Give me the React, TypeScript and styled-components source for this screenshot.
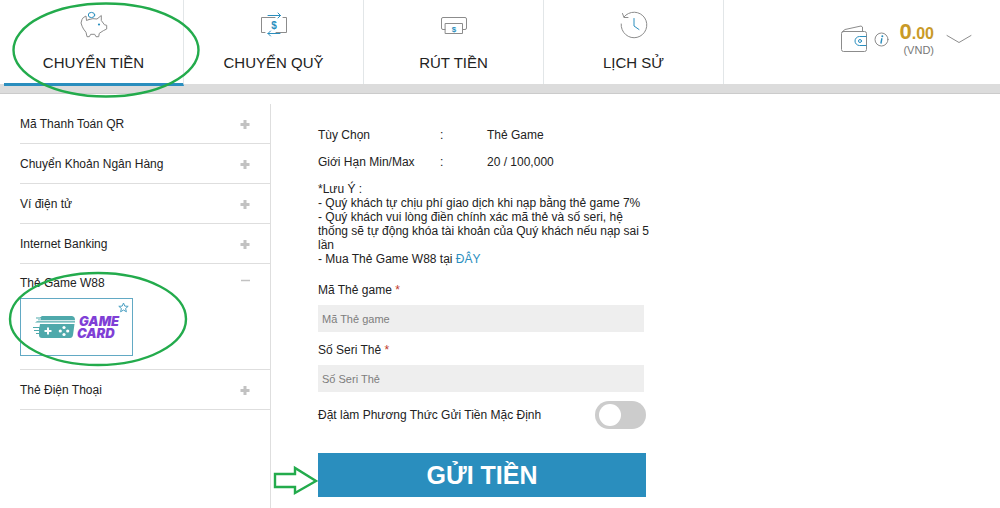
import React from "react";
import styled, { createGlobalStyle } from "styled-components";

const BLUE = "#2a8ebe";
const GREEN = "#23ab4c";
const LINE = "#dedede";

const GlobalStyle = createGlobalStyle`
  *, *::before, *::after { box-sizing: border-box; }
  body {
    margin: 0;
    background: #fff;
    color: #222;
    font-family: "Liberation Sans", Arial, sans-serif;
    font-size: 12px;
  }
  button, input { font-family: inherit; }
`;

const Page = styled.div`
  display: flex;
  flex-direction: column;
  min-height: 100vh;
`;

const Header = styled.header`
  display: flex;
  justify-content: space-between;
  height: 94px;
  padding: 0 28px 0 4px;
  border-bottom: 1px solid #cbcbcb;
  background: linear-gradient(#fff 84px, #dcdcdc 84px);
`;

const Tabs = styled.nav`
  display: flex;
  height: 84px;
`;

const Tab = styled.a<{ $active?: boolean }>`
  position: relative;
  display: flex;
  flex-direction: column;
  align-items: center;
  gap: 12px;
  width: 180px;
  height: ${(p) => (p.$active ? 86 : 84)}px;
  padding-top: 11px;
  border-right: 1px solid #e2e6e8;
  border-bottom: ${(p) => (p.$active ? `3px solid ${BLUE}` : "0")};
  color: #222;
  font-size: 15px;
  line-height: 24px;
  text-decoration: none;
`;

const Icon = styled.svg`
  flex: none;
  fill: none;
  stroke: #8c8c8c;
  stroke-width: 1;
  stroke-linejoin: round;
  stroke-linecap: round;

  .accent { stroke: ${BLUE}; }
  .solid { fill: ${BLUE}; stroke: none; }
  text {
    fill: ${BLUE};
    stroke: none;
    font-weight: bold;
    text-anchor: middle;
  }
`;

const Account = styled.div`
  display: flex;
  align-items: center;
  height: 78px;
`;

const Balance = styled.div`
  display: flex;
  flex-direction: column;
  align-items: flex-end;
  margin: 0 12px 0 11px;
  color: #c99a28;
  font-size: 16px;
  font-weight: bold;
  line-height: 20px;

  big { font-size: 22px; }
  small {
    color: #777;
    font-size: 11px;
    font-weight: normal;
    line-height: 12px;
  }
`;

const PlainButton = styled.button`
  display: flex;
  padding: 0;
  border: 0;
  background: none;
`;

const InfoButton = styled(PlainButton)`
  margin-left: 7px;
`;

const Body = styled.div`
  display: grid;
  flex: 1;
  grid-template-columns: 271px 1fr;
  padding-top: 10px;
`;

const Sidebar = styled.aside`
  padding-left: 20px;
  border-right: 1px solid ${LINE};
`;

const Group = styled.section<{ $open?: boolean }>`
  position: relative;
  padding-bottom: ${(p) => (p.$open ? 13 : 0)}px;
  border-bottom: 1px solid ${LINE};
`;

const GroupButton = styled.button<{ $open?: boolean }>`
  display: flex;
  align-items: center;
  justify-content: space-between;
  width: 100%;
  height: ${(p) => (p.$open ? 34 : 39)}px;
  padding: ${(p) => (p.$open ? "4px" : "0")} 20px 0 0;
  border: 0;
  background: none;
  color: #222;
  font-size: 12px;
  text-align: left;
`;

const Sign = styled.svg`
  fill: none;
  stroke: #c2c2c2;
`;

const Card = styled.button`
  position: relative;
  display: flex;
  align-items: center;
  gap: 1px;
  width: 113px;
  height: 58px;
  padding: 0 0 0 12px;
  border: 1px solid #62a9c4;
  background: #fff;
`;

const CardName = styled.span`
  display: flex;
  flex-direction: column;
  color: #7f3fd6;
  font-family: Inter, "Liberation Sans", sans-serif;
  font-size: 13px;
  font-style: italic;
  font-weight: 900;
  line-height: 12px;
  text-align: left;

  span:first-child { padding-left: 2px; }
`;

const Star = styled.svg`
  position: absolute;
  top: 3px;
  right: 3px;
  fill: none;
  stroke: #4a9fc2;
`;

const Mark = styled.svg<{ $top: number; $left: number }>`
  position: absolute;
  z-index: 2;
  top: ${(p) => p.$top}px;
  left: ${(p) => p.$left}px;
  fill: none;
  stroke: ${GREEN};
  stroke-width: 2.4;
  pointer-events: none;
`;

const Main = styled.main`
  padding: 18px 20px 11px 47px;
`;

const Form = styled.form`
  display: flex;
  flex-direction: column;
  max-width: 328px;
`;

const Facts = styled.dl`
  display: grid;
  grid-template-columns: 122px 1fr;
  margin: 0;
  line-height: 27px;

  dd {
    display: grid;
    grid-template-columns: 47px 1fr;
    margin: 0;
  }
`;

const Note = styled.div`
  margin: 6px -8px 0 0;
  line-height: 14px;

  p { margin: 0; }
  a { color: ${BLUE}; text-decoration: none; }
`;

const Field = styled.div`
  display: flex;
  flex-direction: column;
  padding: 16px 2px 0 0;

  & + & { padding-top: 10px; }
  label { line-height: 17px; }
  label span { color: #c0392b; }
  input {
    height: 27px;
    margin-top: 6px;
    padding: 0 4px;
    border: 0;
    background: #eee;
    font-size: 11px;
  }
  input::placeholder { color: #7d7d7d; opacity: 1; }
`;

const ToggleRow = styled.label`
  display: flex;
  align-items: center;
  justify-content: space-between;
  margin-top: 9px;
`;

const Toggle = styled.input`
  appearance: none;
  display: flex;
  align-items: center;
  width: 51px;
  height: 28px;
  margin: 0;
  padding: 0 4px;
  border-radius: 14px;
  background: #ccc;

  &::before {
    width: 22px;
    height: 22px;
    border-radius: 50%;
    background: #fff;
    content: "";
  }
  &:checked { justify-content: flex-end; background: ${BLUE}; }
`;

const SubmitRow = styled.div`
  position: relative;
  margin-top: 24px;
`;

const Submit = styled.button`
  width: 100%;
  height: 44px;
  padding: 0;
  border: 0;
  background: ${BLUE};
  color: #fff;
  font-size: 25px;
  font-weight: bold;
`;

const PigIcon = () => (
  <Icon width="28" height="28" viewBox="0 0 28 28" aria-hidden="true">
    <path d="M9 8.500 6.500 9.500 6 5Q2.500 6.500 2 8.500L1 12Q2 15.500 3.500 18L6 21.300 7 25.700H9.300L10.700 23.300H14.700L16 25.700H18.700L19.300 22.300 23.300 19.700 26.700 18V14.300L24.500 13.800 21.300 9.500V4.500L17 8Q13 7 9 8.500" />
    <ellipse className="accent" cx="11.500" cy="4" rx="3.200" ry="2.600" />
    <circle className="solid" cx="19" cy="13.500" r="1.100" />
  </Icon>
);

const TransferIcon = () => (
  <Icon width="28" height="28" viewBox="0 0 28 28" aria-hidden="true">
    <path d="M15 6.500H1.500V21.500H5M16 21.500H26.500V6.500H23" />
    <path className="accent" d="M8 4.500H20.500M18 2 20.500 4.500 18 7M20 22.500H8M10.500 20 8 22.500 10.500 25" />
    <text x="14" y="17.500" fontSize="10">$</text>
  </Icon>
);

const WithdrawIcon = () => (
  <Icon width="28" height="28" viewBox="0 0 28 28" aria-hidden="true">
    <path d="M5 18.500H3Q1.500 18.500 1.500 17V8Q1.500 6.500 3 6.500H25Q26.500 6.500 26.500 8V17Q26.500 18.500 25 18.500H23" />
    <path d="M5.500 12.500H22.500V22.500H5.500Z" />
    <text x="14" y="20.500" fontSize="8">$</text>
  </Icon>
);

const HistoryIcon = () => (
  <Icon width="28" height="28" viewBox="0 0 28 28" aria-hidden="true">
    <path d="M1.200 13A12.800 12.800 0 1 0 4 5.900M2.500 2.500 4 6.500 8 6.500" />
    <path className="accent" d="M14 7.500V15L19 18.500" />
  </Icon>
);

const WalletIcon = () => (
  <Icon width="26" height="28" viewBox="0 0 26 28" aria-hidden="true">
    <rect x="0.500" y="6.500" width="25" height="20" rx="2" />
    <path d="M1 7 4 4.500 20 1 21.500 2V6" />
    <path className="accent" d="M25 11.500H18.500A4.500 4.500 0 0 0 18.500 20.500H25" />
    <circle className="accent" cx="19" cy="16" r="1.500" />
  </Icon>
);

const InfoIcon = () => (
  <Icon width="15" height="15" viewBox="0 0 15 15" aria-hidden="true">
    <circle cx="7.500" cy="7.500" r="6.500" />
    <path className="accent" strokeWidth="1.400" d="M7.800 6.800 7 11" />
    <circle className="solid" cx="8.300" cy="4.200" r="1" />
  </Icon>
);

const GamepadLogo = () => (
  <svg width="43" height="22" viewBox="0 0 43 22" aria-hidden="true">
    <g fill="#4fa9ab">
      <path d="M9 0H39Q42 0.500 42 4.300H5V3.500H8V2.500H3V1.500H7Z" />
      <path d="M4 5.300H42V6.500H2Z" />
      <path d="M7 8H41.500L40 19Q39.500 22 37 22H9Q6 22 6 19V18H3V17H6V15H1V14H6V12H0V11H6.500Z" />
    </g>
    <path d="M15 11.500V18.500M11.500 15H18.500" stroke="#fff" strokeWidth="2" />
    <g fill="#fff">
      <circle cx="31" cy="11.500" r="1.600" />
      <circle cx="31" cy="18.500" r="1.600" />
      <circle cx="27.300" cy="15" r="1.600" />
      <circle cx="34.700" cy="15" r="1.600" />
    </g>
  </svg>
);

const GroupHead = ({ title, open }: { title: string; open?: boolean }) => (
  <GroupButton type="button" $open={open} aria-expanded={!!open}>
    {title}
    <Sign width="10" height="10" viewBox="0 0 10 10" aria-hidden="true">
      {open ? (
        <path d="M1 2.500H10" strokeWidth="1.500" />
      ) : (
        <path d="M5 1V10M0.500 5.500H9.500" strokeWidth="3" />
      )}
    </Sign>
  </GroupButton>
);

const groups = ["Mã Thanh Toán QR", "Chuyển Khoản Ngân Hàng", "Ví điện tử", "Internet Banking"];

export default function App() {
  return (
    <Page>
      <GlobalStyle />
      <Header>
        <Tabs>
          <Tab href="#deposit" $active>
            <PigIcon />
            CHUYỂN TIỀN
            <Mark $top={2} $left={8} width="190" height="97" viewBox="0 0 190 97" aria-hidden="true">
              <ellipse cx="94" cy="48" rx="92.500" ry="46.500" />
            </Mark>
          </Tab>
          <Tab href="#transfer">
            <TransferIcon />
            CHUYỂN QUỸ
          </Tab>
          <Tab href="#withdraw">
            <WithdrawIcon />
            RÚT TIỀN
          </Tab>
          <Tab href="#history">
            <HistoryIcon />
            LỊCH SỬ
          </Tab>
        </Tabs>
        <Account>
          <WalletIcon />
          <InfoButton type="button" aria-label="Thông tin">
            <InfoIcon />
          </InfoButton>
          <Balance>
            <span>
              <big>0</big>.00
            </span>
            <small>(VND)</small>
          </Balance>
          <PlainButton type="button" aria-label="Mở rộng">
            <Icon width="26" height="10" viewBox="0 0 26 10" aria-hidden="true">
              <path d="M1 1.500 13 8.500 25 1.500" />
            </Icon>
          </PlainButton>
        </Account>
      </Header>
      <Body>
        <Sidebar>
          {groups.map((g) => (
            <Group key={g}>
              <GroupHead title={g} />
            </Group>
          ))}
          <Group $open>
            <GroupHead title="Thẻ Game W88" open />
            <Card type="button">
              <GamepadLogo />
              <CardName>
                <span>GAME</span>
                <span>CARD</span>
              </CardName>
              <Star width="11" height="11" viewBox="0 0 11 11" aria-hidden="true">
                <path d="M5.500 1 6.800 4.100 10.200 4.300 7.600 6.500 8.400 9.800 5.500 8 2.600 9.800 3.400 6.500 0.800 4.300 4.200 4.100Z" />
              </Star>
            </Card>
            <Mark $top={6} $left={-13} width="182" height="98" viewBox="0 0 182 98" aria-hidden="true">
              <ellipse cx="91" cy="49" rx="88" ry="46" />
            </Mark>
          </Group>
          <Group>
            <GroupHead title="Thẻ Điện Thoại" />
          </Group>
        </Sidebar>
        <Main>
          <Form>
            <Facts>
              <dt>Tùy Chọn</dt>
              <dd>
                <span>:</span>
                <span>Thẻ Game</span>
              </dd>
              <dt>Giới Hạn Min/Max</dt>
              <dd>
                <span>:</span>
                <span>20 / 100,000</span>
              </dd>
            </Facts>
            <Note>
              <p>*Lưu Ý :</p>
              <p>- Quý khách tự chịu phí giao dịch khi nạp bằng thẻ game 7%</p>
              <p>
                - Quý khách vui lòng điền chính xác mã thẻ và số seri, hệ thống sẽ tự động khóa tài khoản của
                Quý khách nếu nạp sai 5 lần
              </p>
              <p>
                - Mua Thẻ Game W88 tại <a href="#buy">ĐÂY</a>
              </p>
            </Note>
            <Field>
              <label htmlFor="code">
                Mã Thẻ game <span>*</span>
              </label>
              <input id="code" type="text" placeholder="Mã Thẻ game" />
            </Field>
            <Field>
              <label htmlFor="serial">
                Số Seri Thẻ <span>*</span>
              </label>
              <input id="serial" type="text" placeholder="Số Seri Thẻ" />
            </Field>
            <ToggleRow>
              Đặt làm Phương Thức Gửi Tiền Mặc Định
              <Toggle type="checkbox" role="switch" />
            </ToggleRow>
            <SubmitRow>
              <Submit type="button">GỬI TIỀN</Submit>
              <Mark $top={12} $left={-45} width="46" height="31" viewBox="0 0 46 31" aria-hidden="true">
                <path d="M2 9H22V3L43 16 22 28V22H2Z" />
              </Mark>
            </SubmitRow>
          </Form>
        </Main>
      </Body>
    </Page>
  );
}
